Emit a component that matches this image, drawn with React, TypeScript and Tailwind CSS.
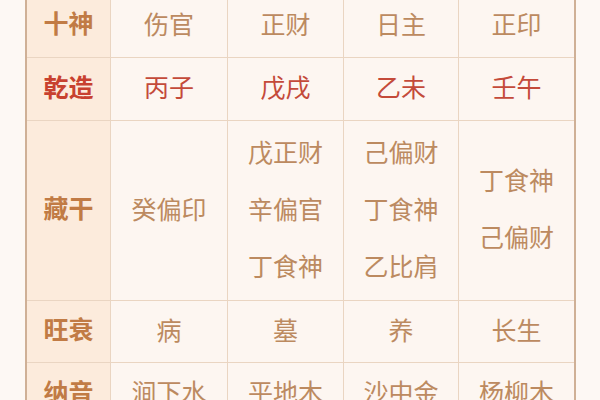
import React from "react";

type Row = { label: string; red?: boolean; h: string; cells: string[][] };

const rows: Row[] = [
  { label: "十神", h: "h-[63px]", cells: [["伤官"], ["正财"], ["日主"], ["正印"]] },
  { label: "乾造", red: true, h: "h-[62px]", cells: [["丙子"], ["戊戌"], ["乙未"], ["壬午"]] },
  {
    label: "藏干",
    h: "h-[179px]",
    cells: [["癸偏印"], ["戊正财", "辛偏官", "丁食神"], ["己偏财", "丁食神", "乙比肩"], ["丁食神", "己偏财"]],
  },
  { label: "旺衰", h: "h-[61px]", cells: [["病"], ["墓"], ["养"], ["长生"]] },
  { label: "纳音", h: "h-[62px]", cells: [["涧下水"], ["平地木"], ["沙中金"], ["杨柳木"]] },
];

export default function App() {
  return (
    <div
      className="w-[600px] h-[400px] overflow-hidden bg-[#fdf8f4]"
      style={{ fontFamily: '"Noto Sans CJK SC", "Noto Sans", sans-serif' }}
    >
      <div className="ml-[25px] mt-[-6px] w-[551px] border-x-2 border-[#cfb096]">
        <div className="grid grid-cols-[83px_116px_115px_114px_115px] gap-px bg-[#ead5c2]">
          {rows.map((r) => (
            <React.Fragment key={r.label}>
              <div
                className={`${r.h} flex items-center justify-center pb-[5px] bg-[#fcebdc] text-[25px] font-bold ${
                  r.red ? "text-[#c8412f]" : "text-[#c17b45]"
                }`}
              >
                {r.label}
              </div>
              {r.cells.map((c, i) => (
                <div
                  key={i}
                  className={`${r.h} flex flex-col items-center justify-center pb-[5px] bg-[#fdf6f1] text-[25px] leading-[57px] ${
                    r.red ? "text-[#c44a3a]" : "text-[#bc8a60]"
                  }`}
                >
                  {c.map((t) => (
                    <div key={t}>{t}</div>
                  ))}
                </div>
              ))}
            </React.Fragment>
          ))}
        </div>
      </div>
    </div>
  );
}
